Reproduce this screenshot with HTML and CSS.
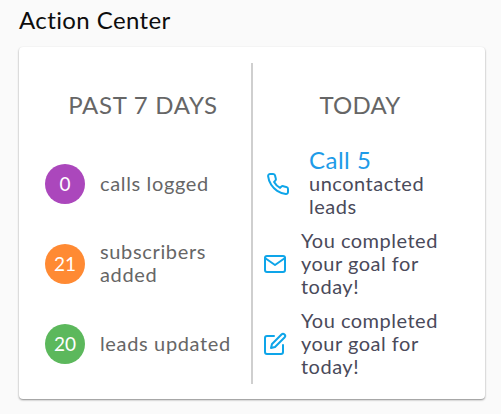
FILE: index.html
```html
<!DOCTYPE html>
<html lang="en">
<head>
<meta charset="utf-8">
<title>Action Center</title>
<link rel="stylesheet" href="styles.css">
</head>
<body>
<h1 class="title">Action Center</h1>
<section class="card">
  <div class="col col-left">
    <h2 class="col-title">PAST 7 DAYS</h2>
    <div class="row">
      <span class="badge purple">0</span>
      <span class="stat">calls logged</span>
    </div>
    <div class="row">
      <span class="badge orange">21</span>
      <span class="stat">subscribers added</span>
    </div>
    <div class="row">
      <span class="badge green">20</span>
      <span class="stat">leads updated</span>
    </div>
  </div>
  <div class="col">
    <h2 class="col-title col-title-today">TODAY</h2>
    <div class="row task task-call">
      <svg class="icon" viewBox="0 0 24 24"><path d="M22 16.9v3a2 2 0 0 1-2.2 2 19.8 19.8 0 0 1-8.6-3.1 19.5 19.5 0 0 1-6-6 19.8 19.8 0 0 1-3.1-8.7A2 2 0 0 1 4.1 2h3a2 2 0 0 1 2 1.7c.1 1 .4 1.9.7 2.8a2 2 0 0 1-.5 2.1L8.1 9.9a16 16 0 0 0 6 6l1.3-1.3a2 2 0 0 1 2.1-.4c.9.3 1.8.6 2.8.7a2 2 0 0 1 1.7 2z"/></svg>
      <div class="task-text"><div class="link">Call 5</div><div>uncontacted leads</div></div>
    </div>
    <div class="row task">
      <svg class="icon" viewBox="0 0 24 24"><path d="M4 4h16a2 2 0 0 1 2 2v12a2 2 0 0 1-2 2H4a2 2 0 0 1-2-2V6a2 2 0 0 1 2-2z"/><path d="M22 6l-10 7L2 6"/></svg>
      <div class="task-text"><div>You completed your goal for today!</div></div>
    </div>
    <div class="row task">
      <svg class="icon" viewBox="0 0 24 24"><path d="M11 4H4a2 2 0 0 0-2 2v14a2 2 0 0 0 2 2h14a2 2 0 0 0 2-2v-7"/><path d="M18.5 2.5a2.1 2.1 0 0 1 3 3L12 15l-4 1 1-4 9.5-9.5z"/></svg>
      <div class="task-text"><div>You completed your goal for today!</div></div>
    </div>
  </div>
</section>
</body>
</html>
```
FILE: styles.css
```css
html, body { margin: 0; padding: 0; }
body {
  width: 501px;
  height: 414px;
  overflow: hidden;
  background: #fafafa;
  font-family: "Lato", "Open Sans", sans-serif;
}
.title {
  margin: 0;
  padding: 6px 0 0 19px;
  height: 47px;
  box-sizing: border-box;
  font-size: 24px;
  line-height: 28px;
  letter-spacing: .4px;
  font-weight: 400;
  color: #0d0d0d;
}
.card {
  margin-left: 19px;
  width: 466px;
  height: 352px;
  box-sizing: border-box;
  padding: 16px;
  display: grid;
  grid-template-columns: 218px 1fr;
  background: #fff;
  border-radius: 4px;
  box-shadow: 0 1px 2px rgba(0,0,0,.45);
}
.col { display: flex; flex-direction: column; }
.col-left { border-right: 2px solid #cfcfcf; box-sizing: border-box; }
.col-title {
  margin: 0;
  height: 81px;
  padding-top: 24px;
  box-sizing: border-box;
  text-align: center;
  font-size: 24px;
  line-height: 36px;
  letter-spacing: .7px;
  font-weight: 400;
  color: #666;
}
.col-title-today { letter-spacing: .2px; padding-right: 2px; }
.row { height: 80px; display: flex; align-items: center; padding-left: 10px; }
.badge {
  width: 40px;
  height: 40px;
  border-radius: 50%;
  flex: none;
  display: flex;
  align-items: center;
  justify-content: center;
  color: #fff;
  font-size: 19px;
  padding-bottom: 1px;
  box-sizing: border-box;
}
.purple { background: #ab47bc; }
.orange { background: #ff8a33; }
.green { background: #5cb85c; }
.stat {
  margin-left: 15px;
  width: 135px;
  padding-bottom: 2px;
  font-size: 20px;
  line-height: 23px;
  letter-spacing: .65px;
  color: #666;
}
.task { padding-left: 10px; }
.task-call { padding-left: 13px; }
.icon {
  width: 24px;
  height: 24px;
  flex: none;
  fill: none;
  stroke: #0ea5e9;
  stroke-width: 2;
  stroke-linecap: round;
  stroke-linejoin: round;
}
.task-text {
  margin-left: 14px;
  width: 150px;
  padding-bottom: 2px;
  font-size: 20px;
  line-height: 23px;
  letter-spacing: .5px;
  color: #4a4a5a;
}
.task-call .task-text { margin-left: 19px; width: 140px; }
.link { font-size: 24px; line-height: 24px; color: #1e9be8; }
```
